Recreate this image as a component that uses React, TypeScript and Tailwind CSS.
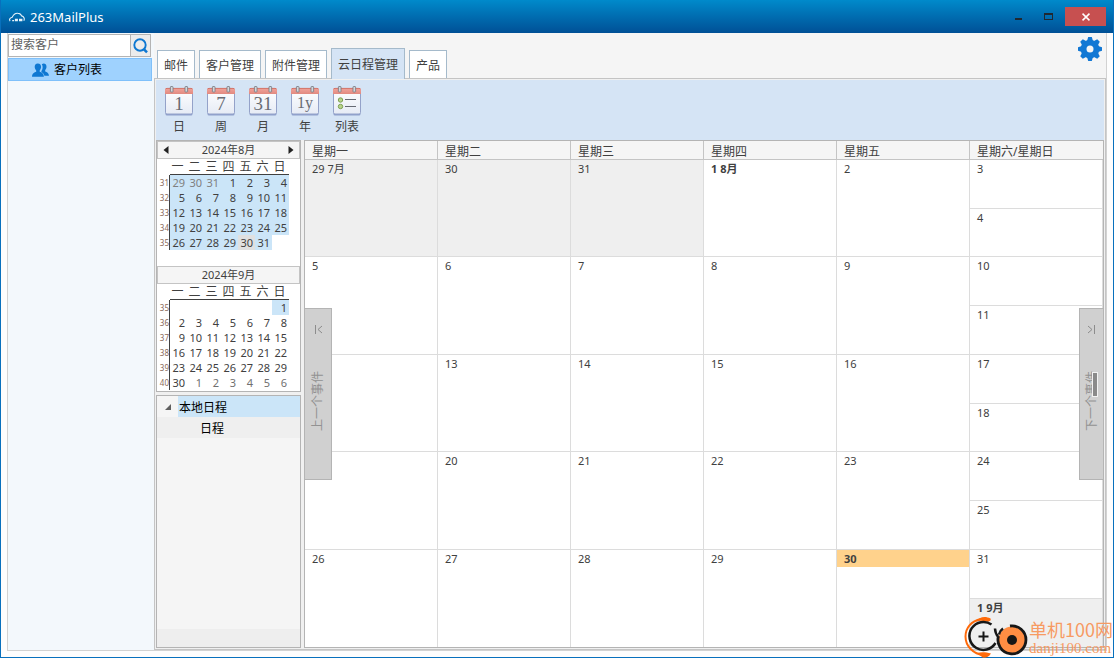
import React from "react";

const WEEKDAYS = ["一", "二", "三", "四", "五", "六", "日"];

type MiniWeek = { no: number; days: (number | null)[] };

const AUGUST: MiniWeek[] = [
  { no: 31, days: [29, 30, 31, 1, 2, 3, 4] },
  { no: 32, days: [5, 6, 7, 8, 9, 10, 11] },
  { no: 33, days: [12, 13, 14, 15, 16, 17, 18] },
  { no: 34, days: [19, 20, 21, 22, 23, 24, 25] },
  { no: 35, days: [26, 27, 28, 29, 30, 31, null] },
];

const SEPTEMBER: MiniWeek[] = [
  { no: 35, days: [null, null, null, null, null, null, 1] },
  { no: 36, days: [2, 3, 4, 5, 6, 7, 8] },
  { no: 37, days: [9, 10, 11, 12, 13, 14, 15] },
  { no: 38, days: [16, 17, 18, 19, 20, 21, 22] },
  { no: 39, days: [23, 24, 25, 26, 27, 28, 29] },
  { no: 40, days: [30, 1, 2, 3, 4, 5, 6] },
];

type Day = { label: string; kind?: "muted" | "bold" | "today" | "mutedBold" };

const WEEKS: Day[][] = [
  [
    { label: "29 7月", kind: "muted" },
    { label: "30", kind: "muted" },
    { label: "31", kind: "muted" },
    { label: "1 8月", kind: "bold" },
    { label: "2" },
    { label: "3" },
    { label: "4" },
  ],
  [{ label: "5" }, { label: "6" }, { label: "7" }, { label: "8" }, { label: "9" }, { label: "10" }, { label: "11" }],
  [{ label: "12" }, { label: "13" }, { label: "14" }, { label: "15" }, { label: "16" }, { label: "17" }, { label: "18" }],
  [{ label: "19" }, { label: "20" }, { label: "21" }, { label: "22" }, { label: "23" }, { label: "24" }, { label: "25" }],
  [
    { label: "26" },
    { label: "27" },
    { label: "28" },
    { label: "29" },
    { label: "30", kind: "today" },
    { label: "31" },
    { label: "1 9月", kind: "mutedBold" },
  ],
];

function CloudLogo() {
  return (
    <svg width="16" height="10" viewBox="0 0 16 10" fill="none" stroke="#e8f4fb" strokeWidth="1.1" aria-hidden="true">
      <path d="M1.200 9C-.2 7.600 1 5.800 3.200 5.200C4.400 2.600 6.400 1 8.800 1.200C10.700 1.300 12 2.300 12.600 3.900C14.900 4.300 15.900 6.600 14.800 8.800" />
      <path d="M3.200 8.700h1.900M6.500 8.700v-1.400h1.800v1.400zM10 7.300h2.800v1.400H10" strokeWidth="1.200" />
    </svg>
  );
}

function GearIcon() {
  return (
    <svg width="24" height="24" viewBox="0 0 24 24" aria-hidden="true">
      <g fill="#1278d4">
        {[0, 45, 90, 135].map((a) => (
          <path key={a} d="M10.200 0h3.600l1.200 4v16l-1.200 4h-3.600L9 20V4z" transform={`rotate(${a} 12 12)`} />
        ))}
        <circle cx="12" cy="12" r="9.300" />
      </g>
      <circle cx="12" cy="12" r="3.500" fill="#f5f5f5" />
    </svg>
  );
}

function UsersIcon() {
  return (
    <svg width="17" height="14" viewBox="0 0 17 14" fill="#0f78d2" aria-hidden="true">
      <path d="M9.800 1.200C12.300-.3 14.700 1.300 14.500 4c-.1 1.400-.7 2.500-1.300 3.100v1.500c1.700.6 3.500 1.300 3.800 4.200h-4.600c-.4-1.900-1.500-2.900-3-3.600V8c1-1.200 1.300-2.600 1.200-4.300 0-.9-.3-1.700-.8-2.500z" />
      <path d="M5.800.4C8.100.4 9.200 2 9.100 4.100 9 5.600 8.300 6.800 7.700 7.400v1.400c1.900.7 4 1.500 4.200 4.900H0c.2-3.400 2.300-4.200 4.200-4.900V7.400C3.500 6.800 2.800 5.600 2.700 4.100 2.600 2 3.600.4 5.800.4z" />
    </svg>
  );
}

function SearchIcon() {
  return (
    <svg width="16" height="16" viewBox="0 0 16 16" fill="none" stroke="#0f78d2" aria-hidden="true">
      <circle cx="7" cy="7" r="5.700" strokeWidth="1.900" />
      <path d="M10.700 11l3.300 3.300" strokeWidth="2.500" />
    </svg>
  );
}

function CalendarIcon({ text }: { text?: string }) {
  return (
    <svg width="28" height="30" viewBox="0 0 28 30" aria-hidden="true">
      <defs>
        <linearGradient id="page" x1="0" y1="0" x2="0" y2="1">
          <stop offset="0" stopColor="#ffffff" />
          <stop offset="1" stopColor="#e6ebf5" />
        </linearGradient>
        <linearGradient id="band" x1="0" y1="0" x2="0" y2="1">
          <stop offset="0" stopColor="#f0a49c" />
          <stop offset="1" stopColor="#e28a80" />
        </linearGradient>
      </defs>
      <rect x=".5" y="3.500" width="27" height="26" rx="1.500" fill="#8fa0cc" />
      <rect x=".5" y="2.500" width="27" height="25.500" rx="1.500" fill="url(#page)" stroke="#94a2c9" />
      <path d="M0 8V3.500Q0 2 1.500 2h25Q28 2 28 3.500V8z" fill="url(#band)" />
      <path d="M.5 3.200Q.8 2.400 2 2.400h24q1.200 0 1.500.8" fill="none" stroke="#c9695f" strokeWidth=".8" />
      <g fill="#d4d6da" stroke="#74777f" strokeWidth=".8">
        <rect x="5.400" y=".5" width="2.600" height="5.500" rx=".6" />
        <rect x="20" y=".5" width="2.600" height="5.500" rx=".6" />
      </g>
      {text ? (
        <text x="14" y={text === "1y" ? 22 : 24} textAnchor="middle" fontSize={text === "1y" ? 16 : 19} fill="#686b73" fontFamily='"Liberation Serif", serif'>
          {text}
        </text>
      ) : (
        <g>
          <circle cx="7.500" cy="14" r="2.200" fill="#b9d48c" stroke="#7da052" />
          <circle cx="7.500" cy="20.500" r="2.200" fill="#b9d48c" stroke="#7da052" />
          <path d="M12 13.500h11M12 20.500h11" stroke="#666a73" />
        </g>
      )}
    </svg>
  );
}

function MiniMonth({ title, weeks, nav, august }: { title: string; weeks: MiniWeek[]; nav?: boolean; august?: boolean }) {
  const dayClass = (week: number, col: number, day: number | null) => {
    const base = "h-[15px] w-[17px] pr-0.5 text-right";
    if (day === null) return base;
    if (august) {
      if (week === 4 && day === 30) return `${base} bg-[#e0e0e0]`;
      return `${base} bg-[#cbe5f8] ${week === 0 && col < 3 ? "text-[#808080]" : ""}`;
    }
    if (week === 0) return `${base} bg-[#cbe5f8]`;
    return `${base} ${week === 5 && col > 0 ? "text-[#707070]" : ""}`;
  };
  return (
    <section className="h-[125px]">
      <div className="flex h-[18px] items-center justify-between border border-[#c4c4c4] bg-[#f5f5f5] px-0.5">
        {nav ? (
          <button aria-label="上个月" className="flex size-3 items-center justify-center">
            <svg width="6" height="8" viewBox="0 0 6 8" fill="#222" aria-hidden="true"><path d="M5.500 0v8L.5 4z" /></svg>
          </button>
        ) : <span className="size-3" />}
        <h2 className="text-[11px] leading-4">{title}</h2>
        {nav ? (
          <button aria-label="下个月" className="flex size-3 items-center justify-center">
            <svg width="6" height="8" viewBox="0 0 6 8" fill="#222" aria-hidden="true"><path d="M.5 0v8l5-4z" /></svg>
          </button>
        ) : <span className="size-3" />}
      </div>
      <table className="border-separate border-spacing-0 text-[11px] leading-[15px]">
        <thead>
          <tr>
            <td className="h-4 w-[13px]" />
            {WEEKDAYS.map((d) => (
              <th key={d} scope="col" className="h-4 w-[17px] border-b border-[#404040] p-0 pr-0.5 text-center text-[12px] leading-[15px] font-normal">{d}</th>
            ))}
          </tr>
        </thead>
        <tbody>
          {weeks.map((w, i) => (
            <tr key={w.no}>
              <th scope="row" className="h-[15px] w-[13px] border-r border-[#404040] p-0 text-right text-[8px] leading-[15px] font-normal text-[#8a6a5a]">{w.no}</th>
              {w.days.map((d, c) => (
                <td key={c} className={dayClass(i, c, d)}>{d}</td>
              ))}
            </tr>
          ))}
        </tbody>
      </table>
    </section>
  );
}

function DayCell({ day, lastRow }: { day: Day; lastRow?: boolean }) {
  const muted = day.kind === "muted" || day.kind === "mutedBold";
  const bold = day.kind === "bold" || day.kind === "today" || day.kind === "mutedBold";
  return (
    <div role="gridcell" className={`min-h-0 flex-1 overflow-hidden border-r border-[#dcdcdc] ${lastRow ? "" : "border-b"} ${muted ? "bg-[#efefef]" : "bg-white"}`}>
      <div className={`h-[17px] px-[7px] text-[11px] leading-[18px] ${bold ? "font-bold" : ""} ${day.kind === "today" ? "bg-[#ffd28c]" : ""}`}>{day.label}</div>
    </div>
  );
}

function EventButton({ label, next }: { label: string; next?: boolean }) {
  return (
    <button
      className={`absolute top-1/2 flex h-[172px] -translate-y-1/2 flex-col items-center border border-[#b4b4b4] bg-[#d0d0d0] pt-4 text-[#929292] ${next ? "-right-px w-[25px]" : "-left-px w-7"}`}
    >
      <svg width="9" height="9" viewBox="0 0 9 9" fill="none" stroke="#8c8c8c" aria-hidden="true">
        {next ? <path d="M1 1l4 3.500L1 8M7.500 0v9" /> : <path d="M8 1L4 4.500 8 8M1.500 0v9" />}
      </svg>
      <span className="mt-[37px] rotate-180 text-[12px] leading-4 [text-orientation:sideways] [writing-mode:vertical-rl]">{label}</span>
      {next && <span className="absolute top-[63px] right-[5px] h-[25px] w-1.5 border border-[#f2f2f2] bg-[#8a8a8a]" />}
    </button>
  );
}

function Watermark() {
  return (
    <div className="absolute right-0 -bottom-px flex h-[42px] items-end">
      <svg width="65" height="42" viewBox="0 0 65 42" fill="none" aria-hidden="true">
        <path d="M17 3C7 5 1.500 12 1.500 20.500C1.500 30 9 38 20 39" stroke="#ff6a0a" strokeWidth="2" />
        <path d="M12 5.500C15 1 21-.5 26.500 2.500C27.500 5 25 6 22 5.500C18 4.500 15 4.500 12 5.500zM13 37c5-1.200 9-.8 14 .6-2 3-4 4-8 4.200" fill="#ff6a0a" />
        <circle cx="48" cy="24" r="13.500" fill="#ff8d43" />
        <path d="M27.500 8.500A14 14 0 1 0 31.500 27" stroke="#171717" strokeWidth="2.500" />
        <path d="M31 12.500q.2 5 3 8M39 12.500q-3 2-4 6" stroke="#171717" strokeWidth="2.500" />
        <path d="M46 10A14 14 0 1 1 34.500 20" stroke="#171717" strokeWidth="2.800" />
        <circle cx="48" cy="24" r="5" fill="#171717" />
        <path d="M14.500 20.500h10M19.500 15.500v10" stroke="#171717" strokeWidth="2" />
      </svg>
      <div className="pb-0.5 text-[#f79a62]">
        <div className="font-['Noto_Sans_CJK_SC',sans-serif] text-[18px] leading-[22px]">单机100网</div>
        <div className="font-['Liberation_Serif',serif] text-[15px] leading-4">danji100.com</div>
      </div>
    </div>
  );
}

const TABS = ["邮件", "客户管理", "附件管理", "云日程管理", "产品"];
const TOOLS: { icon?: string; label: string }[] = [
  { icon: "1", label: "日" },
  { icon: "7", label: "周" },
  { icon: "31", label: "月" },
  { icon: "1y", label: "年" },
  { label: "列表" },
];

export default function App() {
  return (
    <div className="relative flex h-screen flex-col border border-t-0 border-[#0870bd] bg-[#fdfdfd] font-['Noto_Sans','Noto_Sans_CJK_SC',sans-serif] text-[12px] text-[#404040]">
      <header className="flex h-[33px] shrink-0 items-center bg-linear-to-b from-[#008acb] to-[#005096] pr-[7px] pl-2">
        <CloudLogo />
        <h1 className="ml-[5px] text-[13px] leading-5 text-white">263MailPlus</h1>
        <div className="ml-auto flex h-[19px] items-center">
          <button aria-label="最小化" className="flex h-full w-[30px] items-center justify-center pt-1"><span className="h-0.5 w-[7px] bg-[#202830]" /></button>
          <button aria-label="最大化" className="flex h-full w-[30px] items-center justify-center"><span className="h-[7px] w-[9px] border border-t-2 border-[#202830]" /></button>
          <button aria-label="关闭" className="ml-0.5 flex h-full w-[41px] items-center justify-center bg-[#c75050]">
            <svg width="8" height="8" viewBox="0 0 8 8" stroke="#fff" strokeWidth="1.600" aria-hidden="true"><path d="M.5 .7l7 6.600M7.500 .7l-7 6.600" /></svg>
          </button>
        </div>
      </header>

      <div className="flex min-h-0 flex-1 px-[6px] pb-[6px]">
        <div className="flex min-h-0 flex-1 border border-t-0 border-[#d2d2d2] bg-[#f5f5f5]">
          <aside className="flex w-[146px] shrink-0 flex-col bg-[#f3f8fc] pr-0.5">
            <div className="mt-px mr-px flex h-[23px] border border-[#b4b4b4] bg-white">
              <input aria-label="搜索客户" placeholder="搜索客户" className="min-w-0 flex-1 px-0.5 pb-px text-[12px] outline-none placeholder:text-[#606060]" />
              <button aria-label="搜索" className="flex w-5 items-center justify-center border-l border-[#b4b4b4] bg-[#ececec]"><SearchIcon /></button>
            </div>
            <a href="#customers" className="mt-px flex h-[23px] items-center border border-[#7fc0fa] bg-[#9fd2fe] pl-[23px] text-black">
              <UsersIcon />
              <span className="ml-[5px]">客户列表</span>
            </a>
          </aside>

          <main className="flex min-w-0 flex-1 flex-col">
            <div className="relative flex h-[45px] shrink-0 items-end gap-1 pl-[3px]">
              {TABS.map((t, i) => (
                <button
                  key={t}
                  className={`border border-b-0 border-[#a5bacb] px-1.5 leading-4 whitespace-nowrap ${i === 3 ? "relative z-10 -mb-px h-[31px] bg-[#d5e4f5] pt-0.5" : "h-7 bg-white pt-[3px]"}`}
                >
                  {t}
                </button>
              ))}
              <button aria-label="设置" className="mr-1 mb-[17px] ml-auto"><GearIcon /></button>
            </div>

            <div className="flex min-h-0 flex-1 flex-col border border-[#c4c4c4] bg-[#f0f0f0] p-px">
              <div className="flex h-[60px] shrink-0 bg-[#d5e4f5] pt-1.5 pl-0.5">
                {TOOLS.map((t) => (
                  <button key={t.label} className="flex w-[42px] flex-col items-center leading-4">
                    <CalendarIcon text={t.icon} />
                    <span className="mt-[3px]">{t.label}</span>
                  </button>
                ))}
              </div>

              <div className="flex min-h-0 flex-1 gap-[3px]">
                <div className="flex w-[145px] shrink-0 flex-col gap-[3px]">
                  <div className="shrink-0 border border-[#b4b4b4] bg-white">
                    <MiniMonth title="2024年8月" weeks={AUGUST} nav august />
                    <MiniMonth title="2024年9月" weeks={SEPTEMBER} />
                  </div>
                  <div role="tree" aria-label="日程" className="flex min-h-0 flex-1 flex-col border border-[#b4b4b4] bg-[#f5f5f5] text-black">
                    <div role="treeitem" className="flex h-[21px] shrink-0 items-center">
                      <span className="flex w-[21px] justify-center">
                        <svg width="6" height="6" viewBox="0 0 6 6" fill="#606060" aria-hidden="true"><path d="M6 0v6H0z" /></svg>
                      </span>
                      <span className="flex h-full flex-1 items-center bg-[#cbe5f8] pt-0.5 pl-px">本地日程</span>
                    </div>
                    <div role="treeitem" className="flex h-[21px] shrink-0 items-center bg-[#efefef] pt-0.5 pl-[43px]">日程</div>
                    <div className="mt-auto h-[18px] bg-[#eeeeee]" />
                  </div>
                </div>

                <div className="relative flex min-w-0 flex-1 flex-col border border-[#b4b4b4]" role="grid" aria-label="2024年8月">
                  <div role="row" className="grid h-[19px] shrink-0 grid-cols-6 border-b border-[#c4c4c4] bg-[#f5f5f5]">
                    {["星期一", "星期二", "星期三", "星期四", "星期五", "星期六/星期日"].map((d) => (
                      <div key={d} role="columnheader" className="overflow-hidden border-r border-[#c4c4c4] pt-[3px] pl-[7px] leading-4 whitespace-nowrap last:border-r-0">{d}</div>
                    ))}
                  </div>
                  {WEEKS.map((week, i) => (
                    <div key={i} role="row" className="grid min-h-0 flex-1 grid-cols-6">
                      {week.slice(0, 5).map((d) => (
                        <div key={d.label} className="flex min-h-0 flex-col"><DayCell day={d} lastRow={i === 4} /></div>
                      ))}
                      <div className="flex min-h-0 flex-col">
                        <DayCell day={week[5]} />
                        <DayCell day={week[6]} lastRow={i === 4} />
                      </div>
                    </div>
                  ))}
                  <EventButton label="上一个事件" />
                  <EventButton label="下一个事件" next />
                </div>
              </div>
            </div>
          </main>
        </div>
      </div>
      <Watermark />
    </div>
  );
}
